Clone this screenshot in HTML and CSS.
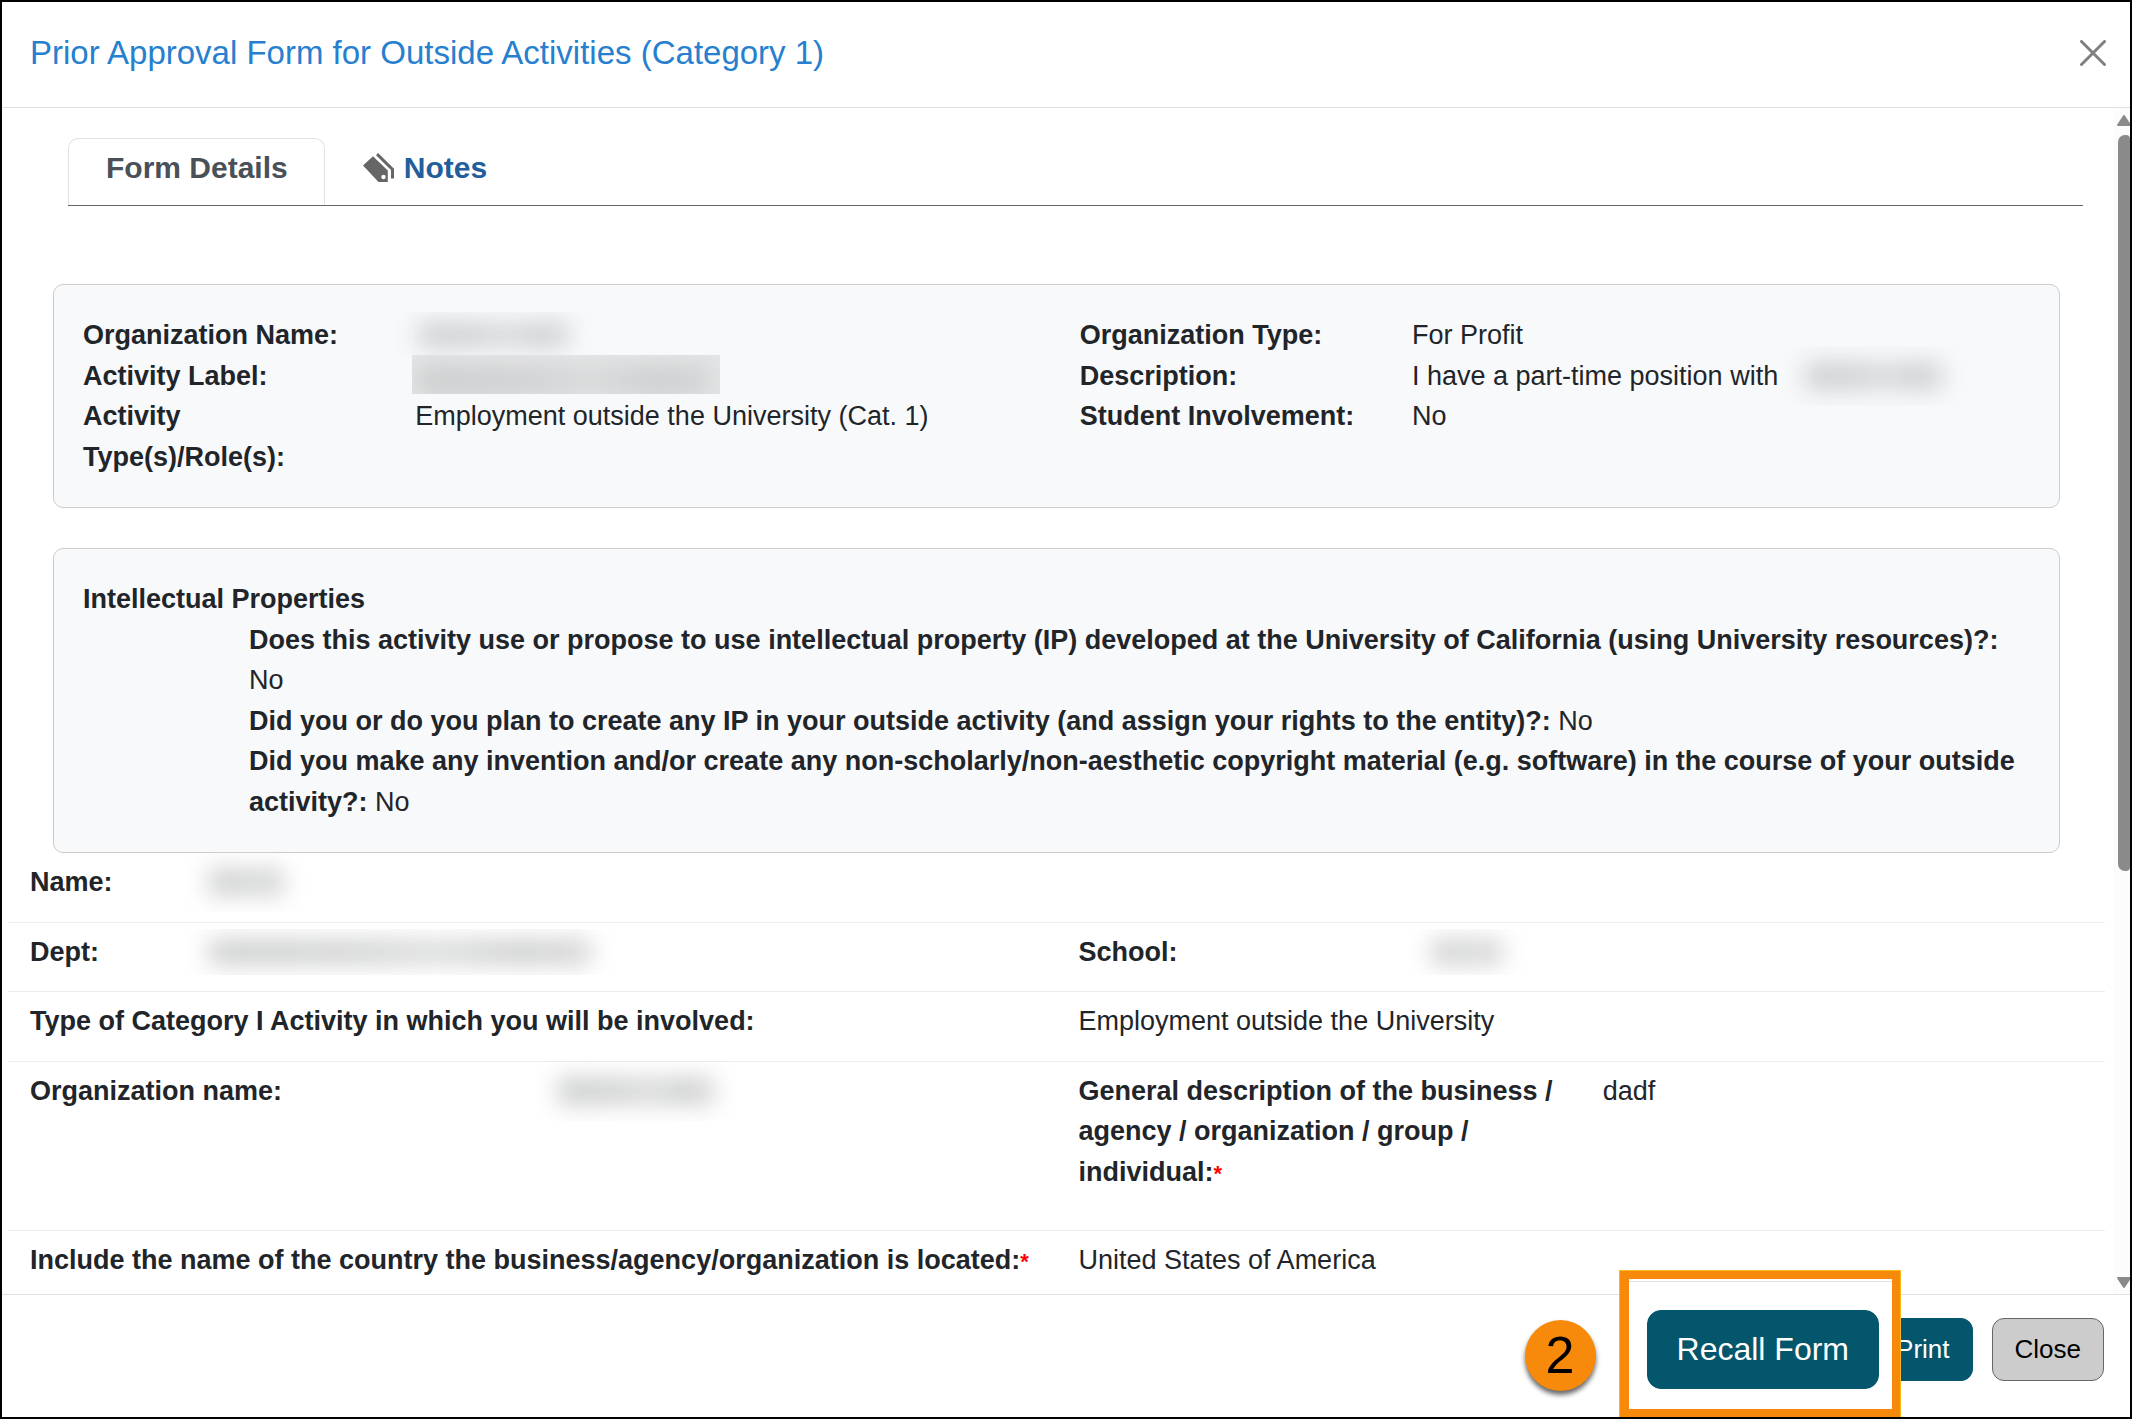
FILE: index.html
```html
<!DOCTYPE html>
<html lang="en">
<head>
    <meta charset="UTF-8">
    <meta name="viewport" content="width=device-width, initial-scale=1.0">
    <title>Prior Approval Form for Outside Activities (Category 1)</title>
    <link rel="stylesheet" href="styles.css">
</head>
<body>
    <div class="modal">
        <header class="modal-header">
            <h1>Prior Approval Form for Outside Activities (Category 1)</h1>
            <button type="button" class="close-icon" aria-label="Close dialog">
                <svg width="26" height="26" viewBox="0 0 26 26">
                    <path d="M1.5 1.5L24.5 24.5M24.5 1.5L1.5 24.5" fill="none" stroke="#808080" stroke-width="3" stroke-linecap="round"/>
                </svg>
            </button>
        </header>

        <div class="modal-body">
            <main class="content">
                <nav class="tabs">
                    <a href="#details" class="tab active">Form Details</a>
                    <a href="#notes" class="tab">
                        <svg width="32" height="30" viewBox="0 0 32 30" fill="#666">
                            <path fill-rule="evenodd" d="M0 12.5L10 3.2L24.8 17.5V29H15.5L0 12.5ZM20.5 21.8A2.2 2.2 0 1 0 20.5 26.2A2.2 2.2 0 1 0 20.5 21.8Z"/>
                            <path d="M13 2.2L15 0L31 15.8V25.5H28V17L13 2.2Z"/>
                        </svg>
                        Notes
                    </a>
                </nav>

                <section class="card" id="details">
                    <div class="summary">
                        <b>Organization Name:</b>
                        <span><i class="redacted w-org"></i></span>
                        <b>Organization Type:</b>
                        <span>For Profit</span>

                        <b>Activity Label:</b>
                        <span><i class="redacted solid w-label"></i></span>
                        <b>Description:</b>
                        <span class="with-redacted">I have a part-time position with <i class="redacted tall w-desc"></i></span>

                        <b>Activity Type(s)/Role(s):</b>
                        <span>Employment outside the University (Cat. 1)</span>
                        <b>Student Involvement:</b>
                        <span>No</span>
                    </div>
                </section>

                <section class="card">
                    <b>Intellectual Properties</b>
                    <div class="questions">
                        <div><b>Does this activity use or propose to use intellectual property (IP) developed at the University of California (using University resources)?:</b> No</div>
                        <div><b>Did you or do you plan to create any IP in your outside activity (and assign your rights to the entity)?:</b> No</div>
                        <div><b>Did you make any invention and/or create any non-scholarly/non-aesthetic copyright material (e.g. software) in the course of your outside activity?:</b> No</div>
                    </div>
                </section>

                <section class="answers">
                    <div class="row">
                        <div class="field narrow">
                            <b>Name:</b>
                            <span><i class="redacted tall w-name"></i></span>
                        </div>
                    </div>
                    <div class="row">
                        <div class="field narrow">
                            <b>Dept:</b>
                            <span><i class="redacted w-dept"></i></span>
                        </div>
                        <div class="field third">
                            <b>School:</b>
                            <span><i class="redacted w-school"></i></span>
                        </div>
                    </div>
                    <div class="row">
                        <b>Type of Category I Activity in which you will be involved:</b>
                        <span>Employment outside the University</span>
                    </div>
                    <div class="row extra">
                        <div class="field">
                            <b>Organization name:</b>
                            <span><i class="redacted tall w-orgname"></i></span>
                        </div>
                        <div class="field">
                            <b>General description of the business / agency / organization / group / individual:<span class="required">*</span></b>
                            <span>dadf</span>
                        </div>
                    </div>
                    <div class="row">
                        <b>Include the name of the country the business/agency/organization is located:<span class="required">*</span></b>
                        <span>United States of America</span>
                    </div>
                </section>
            </main>

            <div class="scrollbar">
                <svg width="14" height="11" viewBox="0 0 14 11"><path d="M7 1L13 10H1Z" fill="#8a8a8a" stroke="#8a8a8a" stroke-width="2" stroke-linejoin="round"/></svg>
                <div class="track"><div class="thumb"></div></div>
                <svg width="14" height="11" viewBox="0 0 14 11"><path d="M7 10L13 1H1Z" fill="#8a8a8a" stroke="#8a8a8a" stroke-width="2" stroke-linejoin="round"/></svg>
            </div>
        </div>

        <footer class="modal-footer">
            <button type="button" class="btn primary">Print</button>
            <button type="button" class="btn secondary">Close</button>
            <div class="callout">
                <span class="step">2</span>
                <div class="highlight">
                    <button type="button" class="btn primary large">Recall Form</button>
                </div>
            </div>
        </footer>
    </div>
</body>
</html>
```

FILE: styles.css
```css
* {
    box-sizing: border-box;
}

body {
    margin: 0;
    font-family: "Liberation Sans", Arial, sans-serif;
    font-size: 27px;
    line-height: 1.5;
    color: #212529;
    background: #fff;
}

.modal {
    display: flex;
    flex-direction: column;
    height: 100vh;
    border: 2px solid #000;
    overflow: hidden;
}

/* Header */
.modal-header {
    display: flex;
    align-items: center;
    justify-content: space-between;
    height: 106px;
    flex-shrink: 0;
    padding: 0 24px 4px 28px;
    border-bottom: 1px solid #dee2e6;
}

h1 {
    margin: 0;
    font-size: 33px;
    font-weight: normal;
    color: #2680cf;
}

.close-icon {
    display: flex;
    padding: 0;
    border: none;
    background: none;
    cursor: pointer;
}

/* Scrolling body */
.modal-body {
    display: flex;
    flex: 1;
    min-height: 0;
}

.content {
    flex: 1;
    padding: 30px 8px 0 6px;
    overflow: hidden;
}

.scrollbar {
    display: flex;
    flex-direction: column;
    align-items: flex-end;
    gap: 9px;
    width: 17px;
    padding: 7px 0 6px;
    background: #fcfcfc;
    overflow: hidden;
}

.scrollbar svg {
    flex-shrink: 0;
    margin-right: -1px;
}

.track {
    flex: 1;
    width: 12px;
}

.thumb {
    height: 65%;
    background: #8a8a8a;
    border-radius: 7px 4px 4px 7px;
}

/* Tabs */
.tabs {
    display: flex;
    margin: 0 22px 78px 60px;
    border-bottom: 1px solid #666;
}

.tab {
    display: flex;
    align-items: center;
    gap: 9px;
    padding: 6px 36px 15px 37px;
    border: 1px solid transparent;
    border-bottom: none;
    font-size: 30px;
    font-weight: bold;
    color: #235d9b;
    text-decoration: none;
}

.tab.active {
    border-color: #dee2e6;
    border-radius: 10px 10px 0 0;
    color: #495057;
}

/* Cards */
.card {
    margin: 0 45px 40px;
    padding: 30px 30px 30px 29px;
    background: #f8f9fb;
    border: 1px solid #ccc;
    border-radius: 10px;
}

.card + .answers {
    margin-top: -40px;
}

.summary {
    display: grid;
    grid-template-columns: 7fr 14fr 7fr 13fr;
}

.summary b {
    padding-right: 40px;
}

.with-redacted {
    display: flex;
    gap: 24px;
}

.questions {
    padding-left: 166px;
}

/* Answers */
.row {
    display: grid;
    grid-template-columns: 1fr 1fr;
    padding: 9px 0 19px;
    border-bottom: 1px solid #ebedef;
}

.row > * {
    padding-left: 22px;
}

.row.extra {
    padding-bottom: 38px;
}

.field {
    display: grid;
    grid-template-columns: calc(50% + 11px) 1fr;
}

.field.narrow {
    grid-template-columns: 175px 1fr;
}

.field.third {
    grid-template-columns: 349px 1fr;
}

.field b {
    padding-right: 24px;
}

.required {
    font-size: 22px;
    color: #f00;
    line-height: 1;
}

/* Hidden personal details */
.redacted {
    display: block;
    position: relative;
    height: 46px;
    margin: -3px 0 -3px -20px;
    overflow: hidden;
}

.redacted::before {
    content: "";
    position: absolute;
    inset: 11px 24px;
    background: linear-gradient(90deg, #c9cacb, #cfd0d1 40%, #d8d9da 60%, #cbcccd 80%, #d0d1d2);
    filter: blur(12px);
}

.redacted.tall {
    height: 60px;
    margin-top: -10px;
    margin-bottom: -10px;
}

.redacted.tall::before {
    inset: 17px 24px;
}

.redacted.solid {
    height: 39px;
    margin: -1px 0 0 -3px;
    background: #e4e5e6;
}

.redacted.solid::before {
    inset: 12px 10px 0 6px;
}

.w-org { width: 198px; }
.w-label { width: 308px; }
.w-desc { width: 184px; }
.w-name { width: 122px; }
.w-dept { width: 430px; }
.w-school { width: 118px; }
.w-orgname { width: 204px; }

/* Footer */
.modal-footer {
    position: relative;
    display: flex;
    justify-content: flex-end;
    gap: 19px;
    height: 123px;
    flex-shrink: 0;
    padding: 23px 26px 0;
    border-top: 1px solid #dee2e6;
}

.btn {
    height: 63px;
    padding: 0 22px;
    border: 1px solid #03566c;
    border-radius: 12px;
    font-family: inherit;
    font-size: 26px;
    cursor: pointer;
}

.btn.primary {
    background: #03566c;
    color: #fff;
}

.btn.secondary {
    background: #ccc;
    border-color: #666;
    color: #000;
}

.btn.large {
    height: 79px;
    padding: 0 29px;
    border-radius: 14px;
    font-size: 32px;
}

/* Step marker laid over the footer */
.callout {
    position: absolute;
    right: 229px;
    bottom: -1px;
    display: flex;
    align-items: center;
    gap: 23px;
}

.step {
    display: flex;
    align-items: center;
    justify-content: center;
    width: 71px;
    height: 71px;
    margin-top: 22px;
    border-radius: 50%;
    background: #f7890b;
    box-shadow: 0 4px 5px rgba(0, 0, 0, 0.6);
    color: #000;
    font-size: 52px;
    line-height: 1;
}

.highlight {
    padding: 31px 13px 20px 18px;
    background: #fff;
    border: 9px solid #f7890b;
    border-left-width: 10px;
    box-shadow: inset 0 2px 0 #fff, inset 0 3px 0 #dee2e6;
    outline: 1px solid #ffb81c;
    outline-offset: -1px;
}
```
